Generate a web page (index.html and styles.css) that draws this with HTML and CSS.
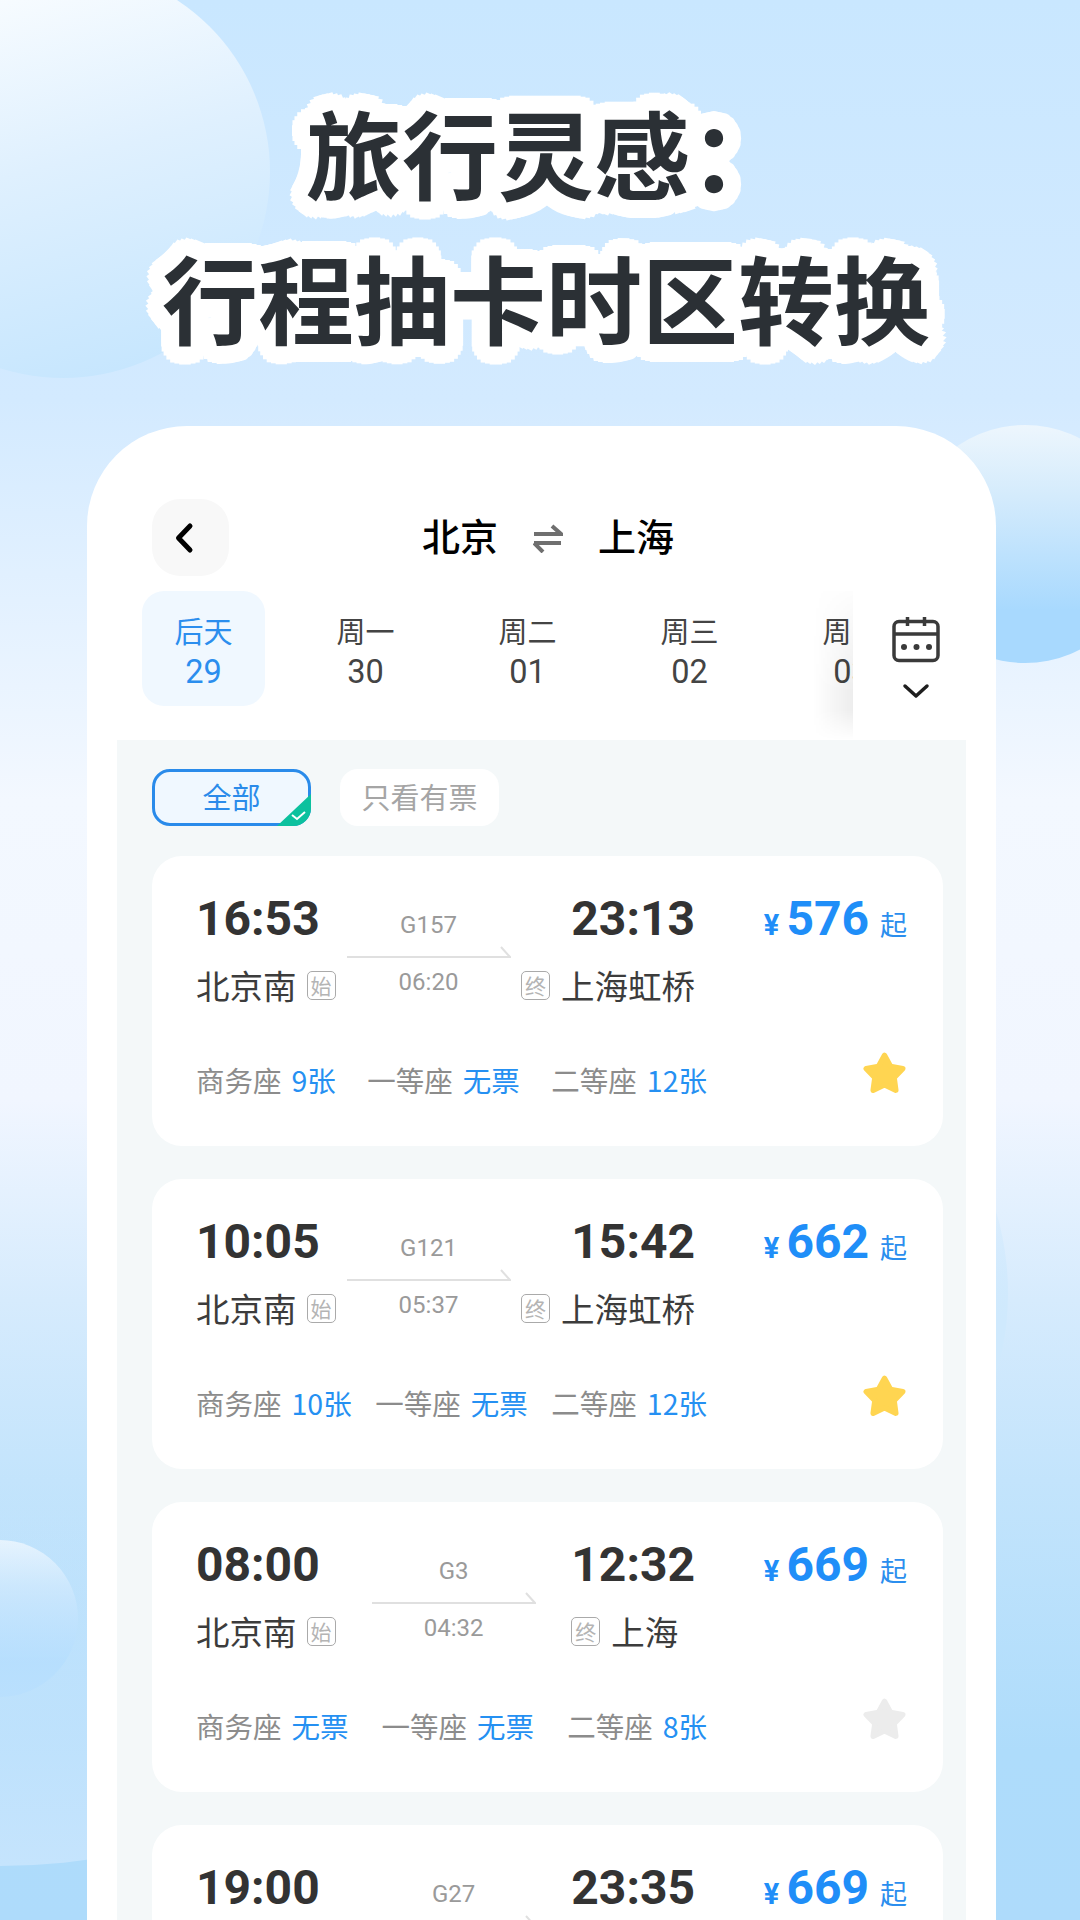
FILE: index.html
```html
<!DOCTYPE html>
<html lang="zh-CN">
<head>
<meta charset="utf-8">
<title>旅行灵感</title>
<link rel="stylesheet" href="styles.css">
</head>
<body>
<div class="screen">
  <div class="bubble bubble-top"></div>
  <div class="bubble bubble-right"></div>
  <div class="bubble bubble-left"></div>
  <div class="bubble bubble-mid"></div>
  <div class="bubble bubble-low"></div>

  <h1 class="headline">
    <span class="headline-line">旅行灵感<span class="colon">：</span></span>
    <span class="headline-line">行程抽卡时区转换</span>
  </h1>

  <main class="phone">
    <header class="route">
      <div class="back">
        <svg width="24" height="32" viewBox="0 0 24 32"><path d="M18 4 6.500 16 18 28" class="back-path"/></svg>
      </div>
      <div class="route-title">
        <span>北京</span>
        <svg width="30" height="30" viewBox="0 0 30 30"><path d="M1 11h27L19 3M1 20h27M1 20l9 9" class="swap-path"/></svg>
        <span>上海</span>
      </div>
    </header>

    <section class="dates">
      <div class="date date-on"><span class="date-label">后天</span><span class="date-num">29</span></div>
      <div class="date"><span class="date-label">周一</span><span class="date-num">30</span></div>
      <div class="date"><span class="date-label">周二</span><span class="date-num">01</span></div>
      <div class="date"><span class="date-label">周三</span><span class="date-num">02</span></div>
      <div class="date"><span class="date-label">周四</span><span class="date-num">03</span></div>
      <div class="calendar">
        <svg width="52" height="50" viewBox="0 0 52 50" class="cal-icon">
          <rect x="4" y="6.500" width="44" height="39" rx="5" class="cal-line"/>
          <path d="M4 19h44M17.500 2v9M34.500 2v9" class="cal-line"/>
          <circle cx="14" cy="32" r="3" class="cal-dot"/><circle cx="26.500" cy="32" r="3" class="cal-dot"/><circle cx="39" cy="32" r="3" class="cal-dot"/>
        </svg>
        <svg width="28" height="16" viewBox="0 0 28 16"><path d="M3 3l11 10L25 3" class="cal-chev"/></svg>
      </div>
    </section>

    <section class="board">
      <div class="chips">
        <div class="chip chip-on">全部
          <svg class="chip-corner" width="34" height="32" viewBox="0 0 34 32"><path d="M34 0v14a18 18 0 0 1-18 18H0z" class="corner-fill"/><path d="M15 21l5 4 8-7" class="corner-tick"/></svg>
        </div>
        <div class="chip">只看有票</div>
      </div>

      <article class="card">
        <div class="trip">
          <div class="end end-left">
            <div class="time">16:53</div>
            <div class="station"><span>北京南</span><span class="tag tag-after">始</span></div>
          </div>
          <div class="mid">
            <div class="train">G157</div>
            <svg class="arrow" width="164" height="12" viewBox="0 0 164 12"><path d="M0 11h163L154 1"/></svg>
            <div class="span">06:20</div>
          </div>
          <div class="end end-right">
            <div class="time">23:13</div>
            <div class="station station-start"><span class="tag tag-before">终</span><span>上海虹桥</span></div>
          </div>
          <div class="price"><span class="yen">¥</span><span class="amount">576</span><span class="from">起</span></div>
        </div>
        <div class="foot">
          <div class="seats">
            <span class="seat">商务座<b>9张</b></span>
            <span class="seat">一等座<b>无票</b></span>
            <span class="seat">二等座<b>12张</b></span>
          </div>
          <svg class="star star-on" width="45" height="45" viewBox="0 0 42 42"><polygon points="21,4 26.600,14.300 38.100,16.400 30,24.900 31.600,36.600 21,31.500 10.400,36.600 12,24.900 3.900,16.400 15.400,14.300"/></svg>
        </div>
      </article>

      <article class="card">
        <div class="trip">
          <div class="end end-left">
            <div class="time">10:05</div>
            <div class="station"><span>北京南</span><span class="tag tag-after">始</span></div>
          </div>
          <div class="mid">
            <div class="train">G121</div>
            <svg class="arrow" width="164" height="12" viewBox="0 0 164 12"><path d="M0 11h163L154 1"/></svg>
            <div class="span">05:37</div>
          </div>
          <div class="end end-right">
            <div class="time">15:42</div>
            <div class="station station-start"><span class="tag tag-before">终</span><span>上海虹桥</span></div>
          </div>
          <div class="price"><span class="yen">¥</span><span class="amount">662</span><span class="from">起</span></div>
        </div>
        <div class="foot">
          <div class="seats">
            <span class="seat">商务座<b>10张</b></span>
            <span class="seat">一等座<b>无票</b></span>
            <span class="seat">二等座<b>12张</b></span>
          </div>
          <svg class="star star-on" width="45" height="45" viewBox="0 0 42 42"><polygon points="21,4 26.600,14.300 38.100,16.400 30,24.900 31.600,36.600 21,31.500 10.400,36.600 12,24.900 3.900,16.400 15.400,14.300"/></svg>
        </div>
      </article>

      <article class="card">
        <div class="trip">
          <div class="end end-left">
            <div class="time">08:00</div>
            <div class="station"><span>北京南</span><span class="tag tag-after">始</span></div>
          </div>
          <div class="mid">
            <div class="train">G3</div>
            <svg class="arrow" width="164" height="12" viewBox="0 0 164 12"><path d="M0 11h163L154 1"/></svg>
            <div class="span">04:32</div>
          </div>
          <div class="end end-right">
            <div class="time">12:32</div>
            <div class="station station-start"><span class="tag tag-before">终</span><span>上海</span></div>
          </div>
          <div class="price"><span class="yen">¥</span><span class="amount">669</span><span class="from">起</span></div>
        </div>
        <div class="foot">
          <div class="seats">
            <span class="seat">商务座<b>无票</b></span>
            <span class="seat">一等座<b>无票</b></span>
            <span class="seat">二等座<b>8张</b></span>
          </div>
          <svg class="star star-off" width="45" height="45" viewBox="0 0 42 42"><polygon points="21,4 26.600,14.300 38.100,16.400 30,24.900 31.600,36.600 21,31.500 10.400,36.600 12,24.900 3.900,16.400 15.400,14.300"/></svg>
        </div>
      </article>

      <article class="card">
        <div class="trip">
          <div class="end end-left">
            <div class="time">19:00</div>
          </div>
          <div class="mid">
            <div class="train">G27</div>
            <svg class="arrow" width="164" height="12" viewBox="0 0 164 12"><path d="M0 11h163L154 1"/></svg>
          </div>
          <div class="end end-right">
            <div class="time">23:35</div>
          </div>
          <div class="price"><span class="yen">¥</span><span class="amount">669</span><span class="from">起</span></div>
        </div>
      </article>
    </section>
  </main>
</div>
</body>
</html>
```

FILE: styles.css
```css
* { box-sizing: border-box; }

html, body { margin: 0; padding: 0; }

body {
  font-family: Roboto, "Noto Sans CJK SC", sans-serif;
}

.screen {
  position: relative;
  width: 1080px;
  height: 1920px;
  overflow: hidden;
  background: linear-gradient(180deg, #c9e7ff 0, #d3eaff 400px, #f3f8ff 800px, #f1f6ff 1100px, #d6ebfd 1300px, #c3e4fc 1480px, #aedcfb 1750px, #aedbfb 1920px);
}

.bubble { position: absolute; border-radius: 50%; }

.bubble-top {
  left: -144px; top: -34px; width: 414px; height: 412px;
  background: linear-gradient(165deg, #f8fcff 12%, #dff0fe 48%, #c6e6fe 92%);
}

.bubble-right {
  left: 906px; top: 425px; width: 238px; height: 238px;
  background: linear-gradient(180deg, #edf6fd 0, #d4ebfc 30%, #a8d9fe 78%);
}

.bubble-left {
  left: -79px; top: 1540px; width: 157px; height: 157px;
  background: linear-gradient(180deg, #f0f8fe 0, #cfe9fd 30%, #a8d9fe 78%);
}

.bubble-mid {
  left: 436px; top: 1007px; width: 572px; height: 572px;
  background: linear-gradient(180deg, rgba(207, 233, 253, 0) 25%, #cfe9fd 55%);
}

.bubble-low {
  left: -705px; top: 466px; width: 1400px; height: 1400px;
  background: linear-gradient(180deg, rgba(196, 228, 253, 0) 70%, #c5e4fd 100%);
}

.headline {
  position: relative;
  margin: 0;
  padding: 78px 0 0 12px;
  height: 426px;
  font-family: "Noto Sans CJK SC", sans-serif;
  font-size: 96px;
  font-weight: 700;
  line-height: 145px;
  color: #2b3035;
  text-align: center;
  text-shadow:
    18px 0 0 #fff, 17.400px 4.700px 0 #fff, 15.600px 9px 0 #fff, 12.700px 12.700px 0 #fff,
    9px 15.600px 0 #fff, 4.700px 17.400px 0 #fff, 0 18px 0 #fff, -4.700px 17.400px 0 #fff,
    -9px 15.600px 0 #fff, -12.700px 12.700px 0 #fff, -15.600px 9px 0 #fff, -17.400px 4.700px 0 #fff,
    -18px 0 0 #fff, -17.400px -4.700px 0 #fff, -15.600px -9px 0 #fff, -12.700px -12.700px 0 #fff,
    -9px -15.600px 0 #fff, -4.700px -17.400px 0 #fff, 0 -18px 0 #fff, 4.700px -17.400px 0 #fff,
    9px -15.600px 0 #fff, 12.700px -12.700px 0 #fff, 15.600px -9px 0 #fff, 17.400px -4.700px 0 #fff,
    9px 0 0 #fff, 6.400px 6.400px 0 #fff, 0 9px 0 #fff, -6.400px 6.400px 0 #fff,
    -9px 0 0 #fff, -6.400px -6.400px 0 #fff, 0 -9px 0 #fff, 6.400px -6.400px 0 #fff;
}

.headline-line { display: block; }

.colon { font-family: "Noto Sans CJK TC", sans-serif; }

.phone {
  position: relative;
  width: 909px;
  height: 1494px;
  margin-left: 87px;
  padding-top: 73px;
  background: #fff;
  border-radius: 100px 100px 0 0;
  overflow: hidden;
}

.route {
  display: flex;
  align-items: center;
  padding: 0 129px 0 65px;
}

.back {
  display: flex;
  align-items: center;
  width: 77px;
  height: 77px;
  padding-left: 20px;
  background: #f8f8f8;
  border-radius: 28px;
}

.back-path {
  fill: none;
  stroke: #000;
  stroke-width: 5;
  stroke-linecap: round;
  stroke-linejoin: round;
}

.route-title {
  flex: 1;
  display: flex;
  align-items: center;
  justify-content: center;
  gap: 35px;
  padding-bottom: 6px;
  font-family: "Noto Sans CJK SC", sans-serif;
  font-size: 38px;
  font-weight: 500;
  color: #000;
}

.route-title svg { margin-top: 6px; }

.swap-path {
  fill: none;
  stroke: #6f6f6f;
  stroke-width: 4;
}

.dates {
  position: relative;
  display: flex;
  gap: 39px;
  height: 149px;
  margin-top: 15px;
  padding: 0 0 0 55px;
}

.date {
  flex: none;
  display: flex;
  flex-direction: column;
  align-items: center;
  width: 123px;
  height: 115px;
  padding-top: 19px;
  color: #444;
}

.date-on {
  background: #f0f8ff;
  border-radius: 22px;
  color: #2b8eee;
}

.date-label {
  font-family: "Noto Sans CJK SC", sans-serif;
  font-size: 29px;
  line-height: 40px;
}

.date-num {
  margin-top: 3px;
  font-size: 32.500px;
  line-height: 38px;
}

.calendar {
  position: absolute;
  left: 766px;
  top: 0;
  width: 143px;
  height: 149px;
  display: flex;
  flex-direction: column;
  align-items: center;
  gap: 18px;
  padding: 24px 18px 0 0;
  background: #fff;
}

.calendar::before {
  content: "";
  position: absolute;
  left: -40px;
  top: 0;
  width: 40px;
  height: 149px;
  background: linear-gradient(90deg, rgba(0, 0, 0, 0), rgba(0, 0, 0, 0.07));
  -webkit-mask: linear-gradient(180deg, rgba(0, 0, 0, 0.1) 0, #000 68%, #000 80%, transparent 100%);
  mask: linear-gradient(180deg, rgba(0, 0, 0, 0.1) 0, #000 68%, #000 80%, transparent 100%);
}

.cal-line { fill: none; stroke: #3a3a3a; stroke-width: 3.500; }
.cal-dot { fill: #3a3a3a; }
.cal-chev { fill: none; stroke: #1e1e1e; stroke-width: 3.500; stroke-linecap: round; stroke-linejoin: round; }

.board {
  position: relative;
  height: 1180px;
  margin: 0 30px;
  padding: 29px 23px 0 35px;
  background: #f4f8f9;
}

.chips {
  display: flex;
  gap: 29px;
  margin-bottom: 30px;
}

.chip {
  position: relative;
  display: flex;
  align-items: center;
  justify-content: center;
  width: 159px;
  height: 57px;
  padding-bottom: 4px;
  background: #fff;
  border-radius: 18px;
  font-family: "Noto Sans CJK SC", sans-serif;
  font-size: 29px;
  color: #a5a5a5;
}

.chip-on {
  background: #f0f8ff;
  border: 3px solid #2a8bea;
  color: #2a8bea;
}

.chip-corner {
  position: absolute;
  right: -3px;
  bottom: -3px;
}

.corner-fill { fill: #0cc19e; }
.corner-tick { fill: none; stroke: #fff; stroke-width: 2; }

.card {
  height: 290px;
  margin-bottom: 33px;
  padding: 36px 36px 0 44px;
  background: #fff;
  border-radius: 30px;
}

.trip { display: flex; }

.end {
  display: flex;
  flex-direction: column;
}

.end-left { min-width: 140px; }

.end-right { align-items: flex-end; }

.time {
  font-size: 48px;
  font-weight: 700;
  line-height: 54px;
  color: #333;
}

.station {
  display: flex;
  align-items: center;
  margin-top: 14px;
  height: 48px;
  font-family: "Noto Sans CJK SC", sans-serif;
  font-size: 33.500px;
  color: #3c3c3c;
}

.station-start { align-self: flex-start; }

.tag {
  display: flex;
  align-items: center;
  justify-content: center;
  width: 29px;
  height: 29px;
  margin-top: 2px;
  border: 1.500px solid #aaa;
  border-radius: 5px;
  font-size: 21px;
  color: #b4b4b4;
}

.tag-after { margin-left: 10px; }
.tag-before { margin-right: 11px; }

.mid {
  flex: 1;
  display: flex;
  flex-direction: column;
  align-items: center;
  padding-top: 20px;
  color: #9a9a9a;
  font-size: 24px;
  line-height: 26px;
}

.arrow {
  margin-top: 8px;
}

.arrow path {
  fill: none;
  stroke: #e0e0e0;
  stroke-width: 2;
}

.span { margin-top: 11px; }

.price {
  display: flex;
  align-items: baseline;
  justify-content: flex-end;
  width: 145px;
  margin-left: 67px;
  height: 54px;
  color: #1f8ef8;
}

.yen { font-size: 29px; font-weight: 700; }
.amount { font-size: 48px; font-weight: 700; line-height: 54px; margin-left: 7px; }
.from { font-family: "Noto Sans CJK SC", sans-serif; font-size: 27px; margin-left: 11px; color: #2b8eee; }

.foot {
  display: flex;
  align-items: center;
  justify-content: space-between;
  margin-top: 52px;
  height: 40px;
}

.seats {
  display: flex;
  justify-content: space-between;
  width: 511px;
}

.seat {
  font-family: "Noto Sans CJK SC", sans-serif;
  font-size: 28.500px;
  line-height: 40px;
  color: #8c8c8c;
}

.seat b {
  font-weight: 400;
  margin-left: 10px;
  color: #2590f2;
}

.star { margin-bottom: 14px; }
.star polygon { stroke-width: 5; stroke-linejoin: round; }
.star-on polygon { fill: #ffd551; stroke: #ffd551; }
.star-off polygon { fill: #ececec; stroke: #ececec; }
```
